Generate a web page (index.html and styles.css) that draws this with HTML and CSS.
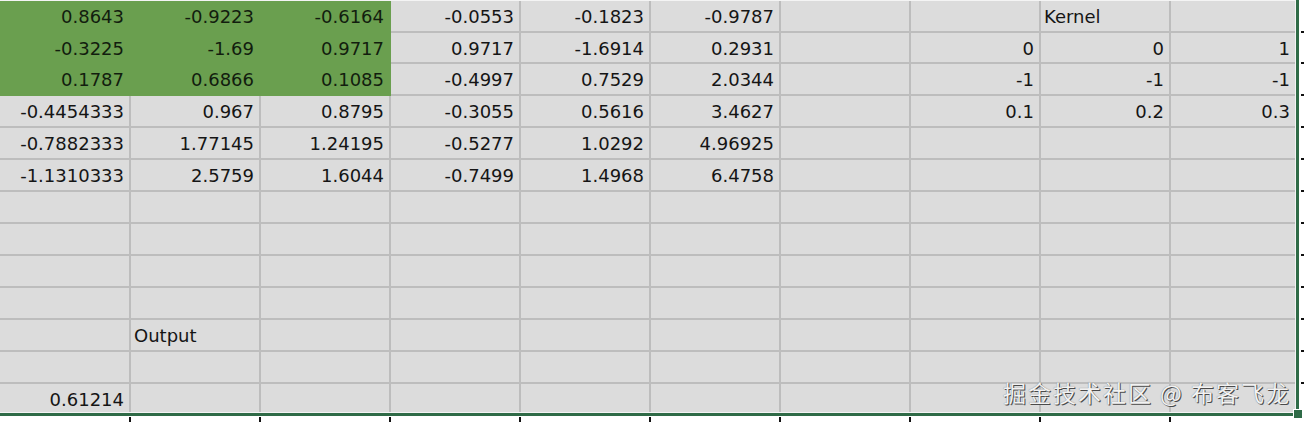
FILE: index.html
```html
<!DOCTYPE html>
<html>
<head>
<meta charset="utf-8">
<link rel="stylesheet" href="styles.css">
</head>
<body>
<div class="wrap">
  <div class="sheet">
    <div class="c g">0.8643</div><div class="c g">-0.9223</div><div class="c g">-0.6164</div><div class="c">-0.0553</div><div class="c">-0.1823</div><div class="c">-0.9787</div><div class="c"></div><div class="c"></div><div class="c l">Kernel</div><div class="c e"></div>
    <div class="c g">-0.3225</div><div class="c g">-1.69</div><div class="c g">0.9717</div><div class="c">0.9717</div><div class="c">-1.6914</div><div class="c">0.2931</div><div class="c"></div><div class="c">0</div><div class="c">0</div><div class="c e">1</div>
    <div class="c g">0.1787</div><div class="c g">0.6866</div><div class="c g">0.1085</div><div class="c">-0.4997</div><div class="c">0.7529</div><div class="c">2.0344</div><div class="c"></div><div class="c">-1</div><div class="c">-1</div><div class="c e">-1</div>
    <div class="c">-0.4454333</div><div class="c">0.967</div><div class="c">0.8795</div><div class="c">-0.3055</div><div class="c">0.5616</div><div class="c">3.4627</div><div class="c"></div><div class="c">0.1</div><div class="c">0.2</div><div class="c e">0.3</div>
    <div class="c">-0.7882333</div><div class="c">1.77145</div><div class="c">1.24195</div><div class="c">-0.5277</div><div class="c">1.0292</div><div class="c">4.96925</div><div class="c"></div><div class="c"></div><div class="c"></div><div class="c e"></div>
    <div class="c">-1.1310333</div><div class="c">2.5759</div><div class="c">1.6044</div><div class="c">-0.7499</div><div class="c">1.4968</div><div class="c">6.4758</div><div class="c"></div><div class="c"></div><div class="c"></div><div class="c e"></div>
    <div class="c"></div><div class="c"></div><div class="c"></div><div class="c"></div><div class="c"></div><div class="c"></div><div class="c"></div><div class="c"></div><div class="c"></div><div class="c e"></div>
    <div class="c"></div><div class="c"></div><div class="c"></div><div class="c"></div><div class="c"></div><div class="c"></div><div class="c"></div><div class="c"></div><div class="c"></div><div class="c e"></div>
    <div class="c"></div><div class="c"></div><div class="c"></div><div class="c"></div><div class="c"></div><div class="c"></div><div class="c"></div><div class="c"></div><div class="c"></div><div class="c e"></div>
    <div class="c"></div><div class="c"></div><div class="c"></div><div class="c"></div><div class="c"></div><div class="c"></div><div class="c"></div><div class="c"></div><div class="c"></div><div class="c e"></div>
    <div class="c"></div><div class="c l">Output</div><div class="c"></div><div class="c"></div><div class="c"></div><div class="c"></div><div class="c"></div><div class="c"></div><div class="c"></div><div class="c e"></div>
    <div class="c"></div><div class="c"></div><div class="c"></div><div class="c"></div><div class="c"></div><div class="c"></div><div class="c"></div><div class="c"></div><div class="c"></div><div class="c e"></div>
    <div class="c b">0.61214</div><div class="c b"></div><div class="c b"></div><div class="c b"></div><div class="c b"></div><div class="c b"></div><div class="c b"></div><div class="c b"></div><div class="c b"></div><div class="c b e"></div>
    <div class="watermark">掘金技术社区 @ 布客飞龙</div>
  </div>
  <div class="rticks">
    <div class="rt"></div><div class="rt"></div><div class="rt"></div><div class="rt"></div><div class="rt"></div><div class="rt"></div><div class="rt"></div><div class="rt"></div><div class="rt"></div><div class="rt"></div><div class="rt"></div><div class="rt"></div>
  </div>
  <div class="bticks">
    <div class="bt"></div><div class="bt"></div><div class="bt"></div><div class="bt"></div><div class="bt"></div><div class="bt"></div><div class="bt"></div><div class="bt"></div><div class="bt"></div>
  </div>
  <div class="handle"></div>
</div>
</body>
</html>
```
FILE: styles.css
```css
html, body {
  margin: 0;
  padding: 0;
  background: #ffffff;
}

.wrap {
  position: relative;
  width: 1304px;
  height: 422px;
  display: grid;
  grid-template-columns: 1299px 5px;
  grid-template-rows: 416px 6px;
  overflow: hidden;
}

.sheet {
  position: relative;
  display: grid;
  grid-template-columns: 131px repeat(8, 130px) 124px;
  grid-template-rows: 32px 31px 32px repeat(9, 32px) 28px;
  padding: 1px 1px 1px 0;
  background: #f4f4f4;
  border-right: 3px solid #2f6b47;
  border-bottom: 3px solid #2f6b47;
  font-family: "DejaVu Sans", sans-serif;
  font-size: 18px;
  color: #151515;
}

.c {
  background: #dcdcdc;
  border-right: 2px solid #bdbdbd;
  border-bottom: 2px solid #bdbdbd;
  line-height: 30px;
  padding: 1px 5px 0 3px;
  text-align: right;
  white-space: nowrap;
}

.c.l {
  text-align: left;
}

.c.e {
  border-right: none;
}

.c.b {
  border-bottom: none;
}

.c.g {
  background: #6a9f4f;
  border-color: #6a9f4f;
  color: #121d0e;
}

.watermark {
  position: absolute;
  right: 5px;
  bottom: 8px;
  font-family: "Noto Sans CJK SC", sans-serif;
  font-size: 23px;
  line-height: 26px;
  letter-spacing: 2px;
  color: #f2f2f2;
  text-shadow: 1px 1px 0 #4a4a4a, 0 0 1px #6a6a6a;
}

.rticks {
  display: grid;
  grid-template-rows: 32px 31px 32px repeat(9, 32px);
  padding-top: 1px;
  align-content: start;
}

.rt {
  border-bottom: 2px solid #111;
  margin-left: 2px;
}

.bticks {
  display: grid;
  grid-template-columns: 131px repeat(8, 130px);
  padding-top: 1px;
}

.bt {
  border-right: 2px solid #111;
}

.handle {
  position: absolute;
  left: 1293px;
  top: 409px;
  width: 8px;
  height: 8px;
  background: #2f6b47;
  border: 1px solid #ffffff;
}
```
